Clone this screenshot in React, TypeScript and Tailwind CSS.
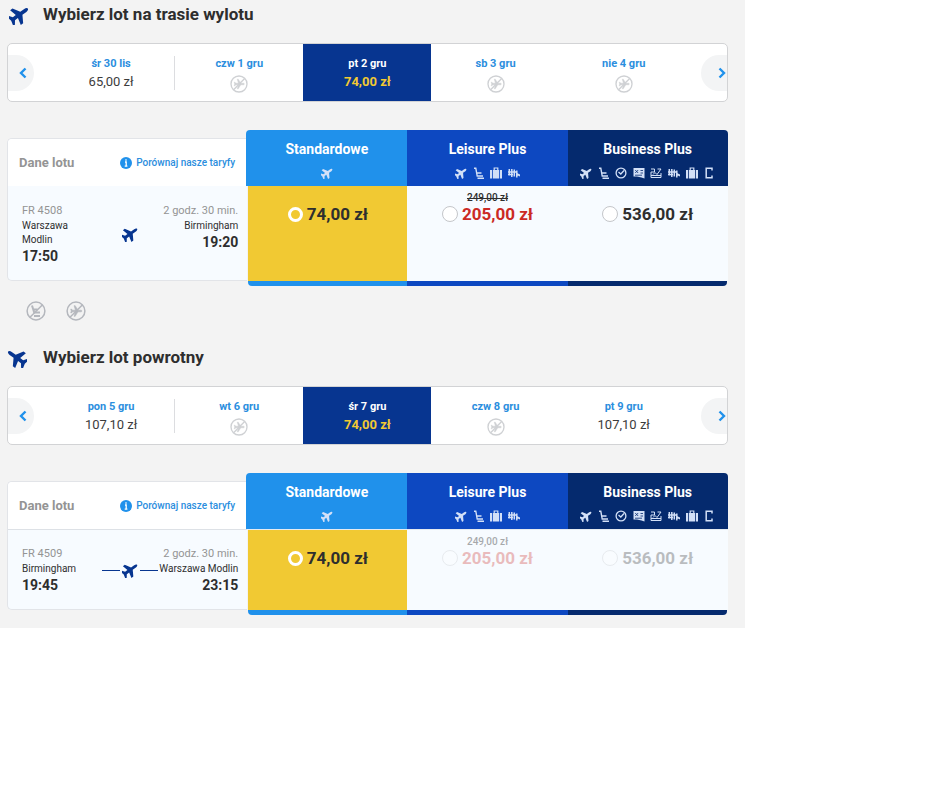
import { useState } from "react";
import type { ReactNode } from "react";
import { clsx } from "clsx";

const PLANE =
  "M21 16v-2l-8-5V3.5c0-.83-.67-1.5-1.5-1.5S10 2.67 10 3.5V9l-8 5v2l8-2.5V19l-2 1.5V22l3.5-1 3.5 1v-1.5L13 19v-5.5l8 2.5z";

function PlaneIcon({ className, mirrored = false }: { className?: string; mirrored?: boolean }) {
  return (
    <svg viewBox="1 1 22 22" className={className} fill="currentColor" aria-hidden="true">
      <g transform={mirrored ? "translate(24 0) scale(-1 1)" : undefined}>
        <g transform="rotate(54 12 12)">
          <path d="M22 16.800v-3.200L14 8.800V3.400C14 1.600 13.200 0 12 0s-2 1.600-2 3.400v5.400L2 13.600v3.200l8-1.900v4l-4 3v2.300L12 22.600l6 1.600v-2.300l-4-3v-4z" />
        </g>
      </g>
    </svg>
  );
}

function NoFlightIcon({ className }: { className?: string }) {
  return (
    <svg viewBox="0 0 20 20" className={className} fill="none" stroke="currentColor" aria-hidden="true">
      <circle cx="10" cy="10" r="8.900" strokeWidth="1.500" />
      <g transform="translate(10.300 10) rotate(90) scale(.56) translate(-11.5 -12)">
        <path d={PLANE} fill="currentColor" stroke="currentColor" strokeWidth="1" />
      </g>
      <path d="M4 16.300 16.300 4" strokeWidth="1.500" />
    </svg>
  );
}

function NoSeatIcon({ className }: { className?: string }) {
  return (
    <svg viewBox="0 0 20 20" className={className} fill="none" stroke="currentColor" aria-hidden="true">
      <circle cx="10" cy="10" r="8.900" strokeWidth="1.500" />
      <path d="M6 4.500l2.200 7h5.800M8 15h6M8 8.500h3.500" strokeWidth="2" />
      <path d="M4 16.300 16.300 4" strokeWidth="1.500" />
    </svg>
  );
}

type Feature = "plane" | "seat" | "clock" | "pass" | "change" | "people" | "bag" | "phone";

const GLYPHS: Record<Exclude<Feature, "plane">, ReactNode> = {
  seat: <path d="M1 1.200h1.800L4.200 9H10M3.500 6H8.500M4.500 11.200H11" strokeWidth="1.400" />,
  clock: (
    <>
      <circle cx="6" cy="6" r="4.900" strokeWidth="1.300" />
      <path d="M3.500 5l2.300 2L9 3.500" strokeWidth="1.300" />
    </>
  ),
  pass: (
    <>
      <path d="M.5 1h11v10.500L8.500 10.500 4 9.500H.5z" fill="currentColor" strokeWidth="0" />
      <path d="M2.200 3l3 3M5.200 3l-3 3M7.500 3.500h2.500M7.500 6h2.500M2 8.200h7" stroke="#052a6e" strokeWidth=".8" />
    </>
  ),
  change: <path d="M1 2h3.500v3H1v5.500h10V6M1 8.500h10M3 7.500l2-2 2 2L11 2M7.500 2H11" strokeWidth="1" />,
  people: (
    <path
      d="M1.300 2v6.500M3.800 2v8M6.300 2.500v7M8.800 3.500v7M0 5h9M9 6.500l3 2.500M0 7.500h5M8 8h4"
      strokeWidth="1.500"
    />
  ),
  bag: (
    <>
      <path d="M4.200 3V1h3.600v2" strokeWidth="1.200" />
      <path d="M0 3h2v8.500H0zM2.800 3h6.400v8.500H2.800zM10 3h2v8.500h-2z" fill="currentColor" strokeWidth="0" />
    </>
  ),
  phone: <path d="M9 3.500V1.200H3.200v9.600H9V8.500" strokeWidth="1.500" />,
};

function FeatureIcon({ name }: { name: Feature }) {
  if (name === "plane") return <PlaneIcon className="size-3" />;
  return (
    <svg viewBox="0 0 12 12" className="size-3" fill="none" stroke="currentColor" aria-hidden="true">
      {GLYPHS[name]}
    </svg>
  );
}

type Day = { label: string; price?: string };

function Chevron({ flip = false }: { flip?: boolean }) {
  return (
    <svg
      viewBox="0 0 8 12"
      className={clsx("h-3 w-2", flip && "-scale-x-100")}
      fill="none"
      stroke="currentColor"
      strokeWidth="2.400"
      aria-hidden="true"
    >
      <path d="M6.500 1.500 2 6l4.500 4.500" />
    </svg>
  );
}

function DateStrip({ days }: { days: Day[] }) {
  const [active, setActive] = useState(2);
  return (
    <div className="flex h-[59px] items-stretch overflow-hidden rounded-[5px] border border-[#d2d3d5] bg-white">
      <div className="flex w-[39px] shrink-0 items-center">
        <button
          aria-label="Poprzednie dni"
          className="flex h-9 w-[26px] items-center justify-center rounded-r-full bg-[#f3f4f5] pl-1 text-[#2091eb]"
        >
          <Chevron />
        </button>
      </div>
      <div className="grid flex-1 grid-cols-5">
        {days.map((day, i) => (
          <button
            key={day.label}
            onClick={() => setActive(i)}
            className={clsx(
              "relative flex flex-col items-center pt-3",
              i === active ? "bg-[#073590]" : "bg-white",
            )}
          >
            <span
              className={clsx(
                "text-[11px] leading-4 font-bold",
                i === active ? "text-white" : "text-[#2b8ede]",
              )}
            >
              {day.label}
            </span>
            {day.price ? (
              <span
                className={clsx(
                  "text-[13px] leading-5",
                  i === active ? "font-bold text-[#f1c933]" : "text-[#3c3c3c]",
                )}
              >
                {day.price}
              </span>
            ) : (
              <NoFlightIcon className="mt-[3px] size-[18px] text-[#cfd1d4]" />
            )}
            {i === 0 && <span className="absolute top-3 right-0 h-[34px] w-px bg-[#dcdde0]" />}
          </button>
        ))}
      </div>
      <div className="flex w-[39px] shrink-0 items-center justify-end">
        <button
          aria-label="Następne dni"
          className="flex h-9 w-[26px] items-center justify-center rounded-l-full bg-[#f3f4f5] pl-4 text-[#2091eb]"
        >
          <Chevron flip />
        </button>
      </div>
    </div>
  );
}

type Fare = { name: string; tone: string; features: Feature[]; price: string; oldPrice?: string };

const FARES: Fare[] = [
  { name: "Standardowe", tone: "bg-[#2091eb]", features: ["plane"], price: "74,00 zł" },
  {
    name: "Leisure Plus",
    tone: "bg-[#0d48c1]",
    features: ["plane", "seat", "bag", "people"],
    price: "205,00 zł",
    oldPrice: "249,00 zł",
  },
  {
    name: "Business Plus",
    tone: "bg-[#052a6e]",
    features: ["plane", "seat", "clock", "pass", "change", "people", "bag", "phone"],
    price: "536,00 zł",
  },
];

type Flight = {
  id: string;
  number: string;
  from: string;
  departs: string;
  to: string;
  arrives: string;
  trail?: boolean;
  dimmed?: boolean;
};

function FlightInfo({ flight }: { flight: Flight }) {
  return (
    <div className="mt-2 mb-[5px] flex flex-col overflow-hidden rounded-l-[5px] border border-r-0 border-[#e2e4e8] bg-[#f7fbff]">
      <div
        className={clsx(
          "flex h-12 items-center justify-between border-b bg-white pr-3 pl-[11px]",
          flight.trail ? "border-[#dde1e6]" : "border-[#f7fbff]",
        )}
      >
        <h3 className="text-[13px] font-bold text-[#949494]">Dane lotu</h3>
        <a href="#taryfy" className="flex items-center gap-1 text-[10px] font-medium text-[#2b8ede]">
          <svg viewBox="0 0 12 12" className="size-3" aria-hidden="true">
            <circle cx="6" cy="6" r="6" fill="#2091eb" />
            <path d="M6 2.200v1.600M5 5h1.200v4M4.700 9.200h2.700" stroke="#fff" strokeWidth="1.300" fill="none" />
          </svg>
          Porównaj nasze taryfy
        </a>
      </div>
      <div className="grid grid-cols-[1fr_auto_1fr] pt-4 pr-[9px] pb-[15px] pl-[14px] text-[10px] leading-[14px] text-[#2e2e2e]">
        <div className="max-w-16">
          <p className="text-[11px] leading-4 whitespace-nowrap text-[#949494]">{flight.number}</p>
          <p>{flight.from}</p>
          <p className="text-sm leading-[18px] font-bold">{flight.departs}</p>
        </div>
        <div className="flex w-14 items-center justify-center gap-0.5 text-[#073590]">
          {flight.trail && <span className="h-px flex-1 bg-current" />}
          <PlaneIcon className="size-4 shrink-0" />
          {flight.trail && <span className="h-px flex-1 bg-current" />}
        </div>
        <div className="text-right whitespace-nowrap">
          <p className="text-[11px] leading-4 text-[#949494]">2 godz. 30 min.</p>
          <p>{flight.to}</p>
          <p className="text-sm leading-[18px] font-bold">{flight.arrives}</p>
        </div>
      </div>
    </div>
  );
}

function FareTable({ flight }: { flight: Flight }) {
  const [chosen, setChosen] = useState(0);
  return (
    <div className="mt-7 grid grid-cols-[3fr_2fr_2fr_2fr]">
      <FlightInfo flight={flight} />
      {FARES.map((fare, i) => {
        const picked = i === chosen;
        const last = i === FARES.length - 1;
        return (
          <div key={fare.name} className="flex flex-col">
            <div
              className={clsx(
                "flex h-14 flex-col items-center pt-[9px] text-white",
                fare.tone,
                i === 0 && "-ml-px rounded-tl-[4px]",
                last && "rounded-tr-[4px]",
              )}
            >
              <h3 className="text-sm leading-5 font-bold">{fare.name}</h3>
              <ul className="mt-2 flex w-full justify-center text-[#d3e0f7]">
                {fare.features.map((name) => (
                  <li key={name} className="flex w-[11%] justify-center">
                    <FeatureIcon name={name} />
                  </li>
                ))}
              </ul>
            </div>
            <label
              className={clsx(
                "flex flex-1 cursor-pointer flex-col items-center pt-[6px]",
                picked ? "bg-[#f1c933]" : "bg-[#f7fbff]",
                i === 0 && "ml-px",
                flight.dimmed && "border-t border-[#e6ebf0] pt-[5px]",
              )}
            >
              <span
                className={clsx(
                  "h-3 text-[10px] leading-3 font-medium text-[#2e2e2e]",
                  flight.dimmed ? "opacity-40" : "line-through",
                )}
              >
                {fare.oldPrice}
              </span>
              <span
                className={clsx(
                  "flex h-5 items-center gap-1 text-[17px] leading-5 font-bold",
                  fare.oldPrice ? "text-[#cb2a24]" : "text-[#2e2e2e]",
                  flight.dimmed && !picked && "opacity-30",
                )}
              >
                <input
                  type="radio"
                  name={flight.id}
                  checked={picked}
                  onChange={() => setChosen(i)}
                  className={clsx(
                    "appearance-none rounded-full",
                    picked ? "size-[15px] border-[3px] border-white" : "size-4 border border-[#c4c6ca] bg-white",
                  )}
                />
                {fare.price}
              </span>
            </label>
            <div className={clsx("h-[5px]", fare.tone, i === 0 && "ml-px rounded-bl-[4px]", last && "mr-px rounded-br-[4px]")} />
          </div>
        );
      })}
    </div>
  );
}

function Heading({ mirrored, children }: { mirrored?: boolean; children: ReactNode }) {
  return (
    <h2 className="mb-[13px] flex h-[30px] items-center text-[17px] font-bold text-[#2e2e2e]">
      <span className={clsx("w-9", !mirrored && "pl-0.5")}>
        <PlaneIcon className="size-5 text-[#073590]" mirrored={mirrored} />
      </span>
      {children}
    </h2>
  );
}

const OUTBOUND_DAYS: Day[] = [
  { label: "śr 30 lis", price: "65,00 zł" },
  { label: "czw 1 gru" },
  { label: "pt 2 gru", price: "74,00 zł" },
  { label: "sb 3 gru" },
  { label: "nie 4 gru" },
];

const RETURN_DAYS: Day[] = [
  { label: "pon 5 gru", price: "107,10 zł" },
  { label: "wt 6 gru" },
  { label: "śr 7 gru", price: "74,00 zł" },
  { label: "czw 8 gru" },
  { label: "pt 9 gru", price: "107,10 zł" },
];

const OUTBOUND: Flight = {
  id: "wylot",
  number: "FR 4508",
  from: "Warszawa Modlin",
  departs: "17:50",
  to: "Birmingham",
  arrives: "19:20",
};

const RETURN: Flight = {
  id: "powrot",
  number: "FR 4509",
  from: "Birmingham",
  departs: "19:45",
  to: "Warszawa Modlin",
  arrives: "23:15",
  trail: true,
  dimmed: true,
};

export default function App() {
  return (
    <div className="min-h-screen bg-white font-[Roboto,sans-serif]">
      <main className="w-4/5 bg-[#f3f3f3] pr-[17px] pb-[13px] pl-[7px]">
        <section>
          <Heading>Wybierz lot na trasie wylotu</Heading>
          <DateStrip days={OUTBOUND_DAYS} />
          <FareTable flight={OUTBOUND} />
          <div className="flex gap-5 pt-[15px] pb-[22px] pl-[19px] text-[#b4b7bd]">
            <NoSeatIcon className="size-5" />
            <NoFlightIcon className="size-5" />
          </div>
        </section>
        <section>
          <Heading mirrored>Wybierz lot powrotny</Heading>
          <DateStrip days={RETURN_DAYS} />
          <FareTable flight={RETURN} />
        </section>
      </main>
    </div>
  );
}
